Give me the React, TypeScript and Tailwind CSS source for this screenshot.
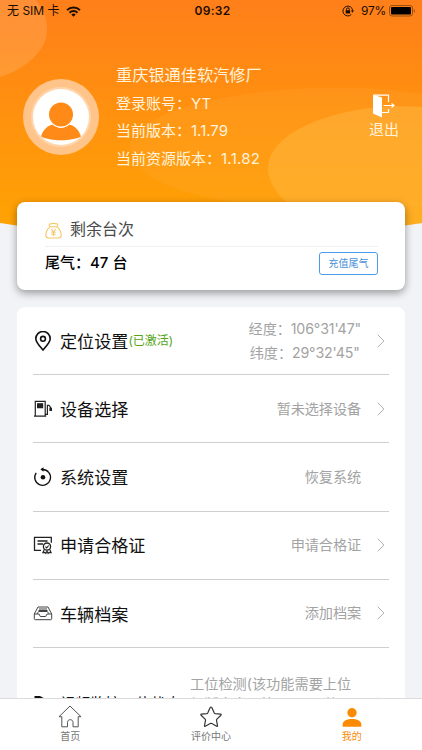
import type { ReactNode } from 'react';

type MenuItem = {
  icon: ReactNode;
  title: string;
  tag?: string;
  values: string[];
  hasArrow: boolean;
};

const PinIcon = () => (
  <svg viewBox="0 0 20 20" className="size-5" fill="none" stroke="#111" strokeWidth="1.6">
    <path d="M10 19C7.6 16.2 2.8 11.3 2.8 7.7a7.2 7.2 0 0 1 14.4 0C17.2 11.3 12.4 16.2 10 19z" />
    <circle cx="10" cy="7.8" r="2.4" />
  </svg>
);

const PumpIcon = () => (
  <svg viewBox="0 0 20 20" className="size-5" fill="none" stroke="#222" strokeWidth="1.2">
    <path d="M2.3 17V2.3h9.9V17M1 17.2h12.2M12.5 15.300h1.900V6.300h1.800" />
    <path d="M4.600 4.800h5v3.800h-5zM17 9.300h1.400v2H17z" fill="#222" />
    <path d="M16.200 6.300l1.700 3" />
  </svg>
);

const ResetIcon = () => (
  <svg viewBox="0 0 20 20" className="size-5" fill="none" stroke="#111" strokeWidth="1.3">
    <path d="M3.2 5.800A7.900 7.900 0 1 0 9.500 2.500q3-.2 5.500 1.700" />
    <path d="M10.500.2v4.500L7.300 2.300z" fill="#111" stroke="none" />
    <circle cx="10" cy="10.300" r="2.300" fill="#111" stroke="none" />
  </svg>
);

const CertificateIcon = () => (
  <svg viewBox="0 0 20 20" className="size-5" fill="none" stroke="#222" strokeWidth="1.3">
    <path d="M8 15.300H1.500V2.300h16.800v5.500" />
    <path d="M4.500 6h10M4.500 9h5.500" />
    <circle cx="14" cy="11.600" r="3.600" />
    <path d="M12.400 11.600l1.300 1.300 2-2.400M11.400 14.300l-1.500 3.300 2.100-.2.900 1.100 1.100-2.500 1.100 2.500.9-1.100 2.100.2-1.500-3.300" strokeWidth="1.100" />
  </svg>
);

const TrayIcon = () => (
  <svg viewBox="0 0 20 20" className="size-5" fill="none" stroke="#444" strokeWidth="1">
    <path d="M1.300 11L5 4h10l3.700 7v4.700q0 1-1 1H2.300q-1 0-1-1zM1.300 11h4.700l1.300 2.500h5.400L14 11h4.700" />
    <path d="M4 10.800l1.700-2.300h8.600l1.700 2.300M6 6h8M5.500 7.500h9" />
  </svg>
);

const CameraIcon = () => (
  <svg viewBox="0 0 20 20" className="size-5 shrink-0" fill="#111">
    <path d="M1.500 2H7l5.500 3v11h-11zM14 8l5-2v8l-5-2z" />
  </svg>
);

const Chevron = () => (
  <svg viewBox="0 0 8 14" className="h-3.5 w-2" fill="none" stroke="#b0b0b0">
    <path d="M.7 .700l6.200 6.300-6.200 6.300" />
  </svg>
);

const MENU_ITEMS: MenuItem[] = [
  { icon: <PinIcon />, title: '定位设置', tag: '(已激活)', values: ['经度：106°31\'47"', '纬度：29°32\'45"'], hasArrow: true },
  { icon: <PumpIcon />, title: '设备选择', values: ['暂未选择设备'], hasArrow: true },
  { icon: <ResetIcon />, title: '系统设置', values: ['恢复系统'], hasArrow: false },
  { icon: <CertificateIcon />, title: '申请合格证', values: ['申请合格证'], hasArrow: true },
  { icon: <TrayIcon />, title: '车辆档案', values: ['添加档案'], hasArrow: true },
];

const StatusBar = () => (
  <div className="grid h-[22px] grid-cols-3 items-center pr-1.5 pl-[7px] text-[12px] text-[#1c0d00]">
    <div className="flex items-center gap-1.5">
      <span className="whitespace-nowrap">无 SIM 卡</span>
      <svg viewBox="0 0 15 11" className="h-[11px] w-[15px]" fill="none" stroke="#1c0d00" strokeWidth="2">
        <path d="M1 4.100a9.300 9.300 0 0 1 13 0M3.500 6.700a5.700 5.700 0 0 1 8 0" />
        <path d="M7.500 10.800L5.300 8.600a3.100 3.100 0 0 1 4.400 0z" fill="#1c0d00" stroke="none" />
      </svg>
    </div>
    <span className="pl-0.5 text-center text-[12px] font-semibold tracking-[0.3px]">09:32</span>
    <div className="flex items-center justify-end">
      <svg viewBox="0 0 12 12" className="mr-[7px] size-3" fill="none" stroke="#1c0d00">
        <path d="M9.300 9.500A4.900 4.900 0 1 1 10.700 5.500" />
        <path d="M8.900 5.500h3.100l-1.500 2.200z" fill="#1c0d00" stroke="none" />
        <path d="M4.500 5.500V4.300a1.400 1.400 0 0 1 2.800 0v1.200" />
        <path d="M3.700 5.200h4.400v3.300H3.700z" fill="#1c0d00" stroke="none" />
      </svg>
      <span className="mr-[3px] text-[12px] tracking-[-0.3px]">97%</span>
      <svg viewBox="0 0 27 12" className="h-3 w-[27px]">
        <rect x=".5" y=".5" width="23" height="10.500" rx="2.500" fill="none" stroke="#99500f" />
        <rect x="2" y="2" width="20" height="7.500" rx="1" fill="#000" />
        <path d="M24.800 4v4c1.500-.5 1.500-3.500 0-4z" fill="#99500f" />
      </svg>
    </div>
  </div>
);

const HeaderBackground = () => (
  <svg viewBox="0 0 422 240" className="absolute inset-x-0 top-0 h-[240px] w-full">
    <defs>
      <linearGradient id="sky" x1="0" y1="0" x2="0" y2="1">
        <stop offset="0" stopColor="#ff7f1a" />
        <stop offset="1" stopColor="#ffa502" />
      </linearGradient>
      <clipPath id="hero">
        <path d="M0 0h422v223Q211 257 0 223z" />
      </clipPath>
    </defs>
    <g clipPath="url(#hero)">
      <path d="M0 0h422v240H0z" fill="url(#sky)" />
      <path d="M0 0h36C45 10 49 24 46 38 41 55 23 70 0 77z" fill="#fff" fillOpacity=".13" />
      <path d="M422 94C350 82 250 88 190 106 140 120 118 140 137 165c20 26 85 37 130 41h155z" fill="#ffb03a" fillOpacity=".2" />
      <path d="M422 107C350 101 268 128 268 168c0 36 60 72 154 72z" fill="#ffc04e" fillOpacity=".4" />
    </g>
  </svg>
);

const Profile = () => (
  <div className="flex h-[180px] items-start pr-[23px] pl-[23px]">
    <div className="mt-[57px] flex size-[76px] items-center justify-center rounded-full bg-[#ffc48a]">
      <div className="size-14 overflow-hidden rounded-full bg-white ring-2 ring-[#ffd5ab]">
        <svg viewBox="0 0 56 56" className="size-full" fill="#ff8a17">
          <circle cx="28" cy="25.500" r="12" />
          <path d="M8 47.500C10 41 14 37 19.500 35.500c5 4.500 12 4.500 17 0C42 37 46 41 48 47.500 38 52.500 18 52.500 8 47.500z" />
        </svg>
      </div>
    </div>
    <div className="ml-[17px] pt-[40px] text-[15px] leading-[27.6px] text-[#fff3dc]">
      <p className="text-[16.2px]">重庆银通佳软汽修厂</p>
      <p>登录账号：YT</p>
      <p>当前版本：1.1.79</p>
      <p>当前资源版本：<span className="tracking-[0.25px]">1.1.82</span></p>
    </div>
    <div className="mt-[72px] ml-auto flex flex-col items-center text-[15px] leading-5 text-[#fff3dc]">
      <svg viewBox="0 0 22 24" className="h-6 w-[22px]" fill="none" stroke="#fff" strokeWidth="1.200">
        <path d="M0 .500l9 3v20l-9-4z" fill="#fff" stroke="none" />
        <path d="M1 1.200h14.500V8M15.500 15V18.500H9M10.500 11.500h10M18.500 9.500l2.500 2-2.500 2" />
      </svg>
      <span className="mt-0.5">退出</span>
    </div>
  </div>
);

const BalanceCard = () => (
  <section className="mx-[17px] h-[88px] rounded-lg bg-white pr-[27px] pl-7 shadow-[0_3px_8px_rgba(0,0,0,0.38)]">
    <div className="flex h-[45px] items-end gap-2 border-b border-[#f0f0f0] pb-[5px]">
      <svg viewBox="0 0 17 17" className="mb-0.5 size-[17px]" fill="none" stroke="#f5c866" strokeWidth="1.100">
        <path d="M5 4.800C3.500 2.700 4.300 1.500 6 1.900L8.500 1.200 11 1.900c1.700-.4 2.500.8 1 2.900M5 4.800h7M5 4.800C2 7.500.8 10 .8 13c0 2 .7 3 2.700 3h10c2 0 2.700-1 2.700-3 0-3-1.200-5.500-4.200-8.200" />
        <path d="M6.300 7l2.200 3 2.200-3M8.500 10v4M6.300 10.300h4.400M6.300 12.200h4.400" />
      </svg>
      <span className="text-[16px] leading-6 text-[#4a4a4a]">剩余台次</span>
    </div>
    <div className="flex h-8 items-center justify-between">
      <span className="text-[15px] font-medium text-black">尾气：47 台</span>
      <button className="h-[23px] w-[59px] rounded-[3px] border border-[#4b9bed] text-[10px] text-[#4a90d9]">充值尾气</button>
    </div>
  </section>
);

const MenuRow = ({ icon, title, tag, values, hasArrow }: MenuItem) => (
  <li className="flex h-[68.2px] items-center border-b border-[#cfcfcf]">
    {icon}
    <span className="ml-[7px] pt-0.5 text-[17.1px] text-[#111]">{title}</span>
    {tag && <span className="text-[12px] text-[#55a516]">{tag}</span>}
    <div className="ml-auto text-center text-[14.2px] leading-6 tracking-[-0.01em] text-[#a3a3a3]">
      {values.map((value) => (
        <p key={value}>{value}</p>
      ))}
    </div>
    <div className="flex w-7 justify-end pr-1">{hasArrow && <Chevron />}</div>
  </li>
);

const TabBar = () => (
  <nav className="relative grid h-[52px] shrink-0 grid-cols-3 border-t border-[#dcdcdc] bg-white text-[10px] leading-[14px] text-[#777]">
    <a className="flex flex-col items-center pt-1.5">
      <svg viewBox="0 0 24 24" className="size-6" fill="none" stroke="#555">
        <path d="M1 11.700L12 1l11 10.700h-2.800v10.100H15v-4.500c0-3.500-5.500-3.500-5.500 0v4.500H3.800V11.700z" />
      </svg>
      <span>首页</span>
    </a>
    <a className="flex flex-col items-center pt-1.5">
      <svg viewBox="0 0 24 24" className="size-6" fill="none" stroke="#333" strokeWidth="1.200" strokeLinejoin="round">
        <path d="M12.800 2.500l2.500 5.400q.3.600 1 .7l5.300.6q1 .2.300 1l-4 3.900q-.5.500-.4 1.200l1 5.300q.1 1-.8.600l-4.900-2.700q-.8-.4-1.600 0l-4.900 2.700q-.9.400-.8-.6l1-5.300q.1-.7-.4-1.200l-4-3.900q-.7-.8.300-1l5.300-.6q.7-.1 1-.7l2.500-5.400q.8-1 1.600 0z" />
      </svg>
      <span>评价中心</span>
    </a>
    <a className="flex flex-col items-center pt-1.5 text-[#f78b0c]">
      <svg viewBox="0 0 24 24" className="size-6" fill="#fb8b05">
        <circle cx="12" cy="7.800" r="4.700" />
        <path d="M2.700 21.800v-2.500c0-7 18.600-7 18.600 0v2.500z" />
      </svg>
      <span>我的</span>
    </a>
  </nav>
);

export default function App() {
  return (
    <div className="flex h-[750px] w-[422px] flex-col overflow-hidden bg-[#f2f3f6] font-['Inter','Noto_Sans_CJK_SC',sans-serif]">
      <main className="relative min-h-0 flex-1 overflow-hidden">
        <HeaderBackground />
        <div className="relative">
          <StatusBar />
          <Profile />
          <BalanceCard />
          <ul className="mx-[17px] mt-[17px] rounded-lg bg-white px-4">
            {MENU_ITEMS.map((item) => (
              <MenuRow key={item.title} {...item} />
            ))}
            <li className="flex h-[113px] items-center">
              <CameraIcon />
              <span className="ml-[7px] w-[130px] shrink-0 text-[15.1px] whitespace-nowrap text-[#111]">视频监控工位状态</span>
              <p className="w-[171px] text-[14.2px] leading-[20.5px] text-[#a3a3a3]">
                工位检测(该功能需要上位<br />
                机版本大于等于1.1.70的<br />
                版本支持)
              </p>
              <div className="flex w-7 justify-end pr-1">
                <Chevron />
              </div>
            </li>
          </ul>
        </div>
      </main>
      <TabBar />
    </div>
  );
}
